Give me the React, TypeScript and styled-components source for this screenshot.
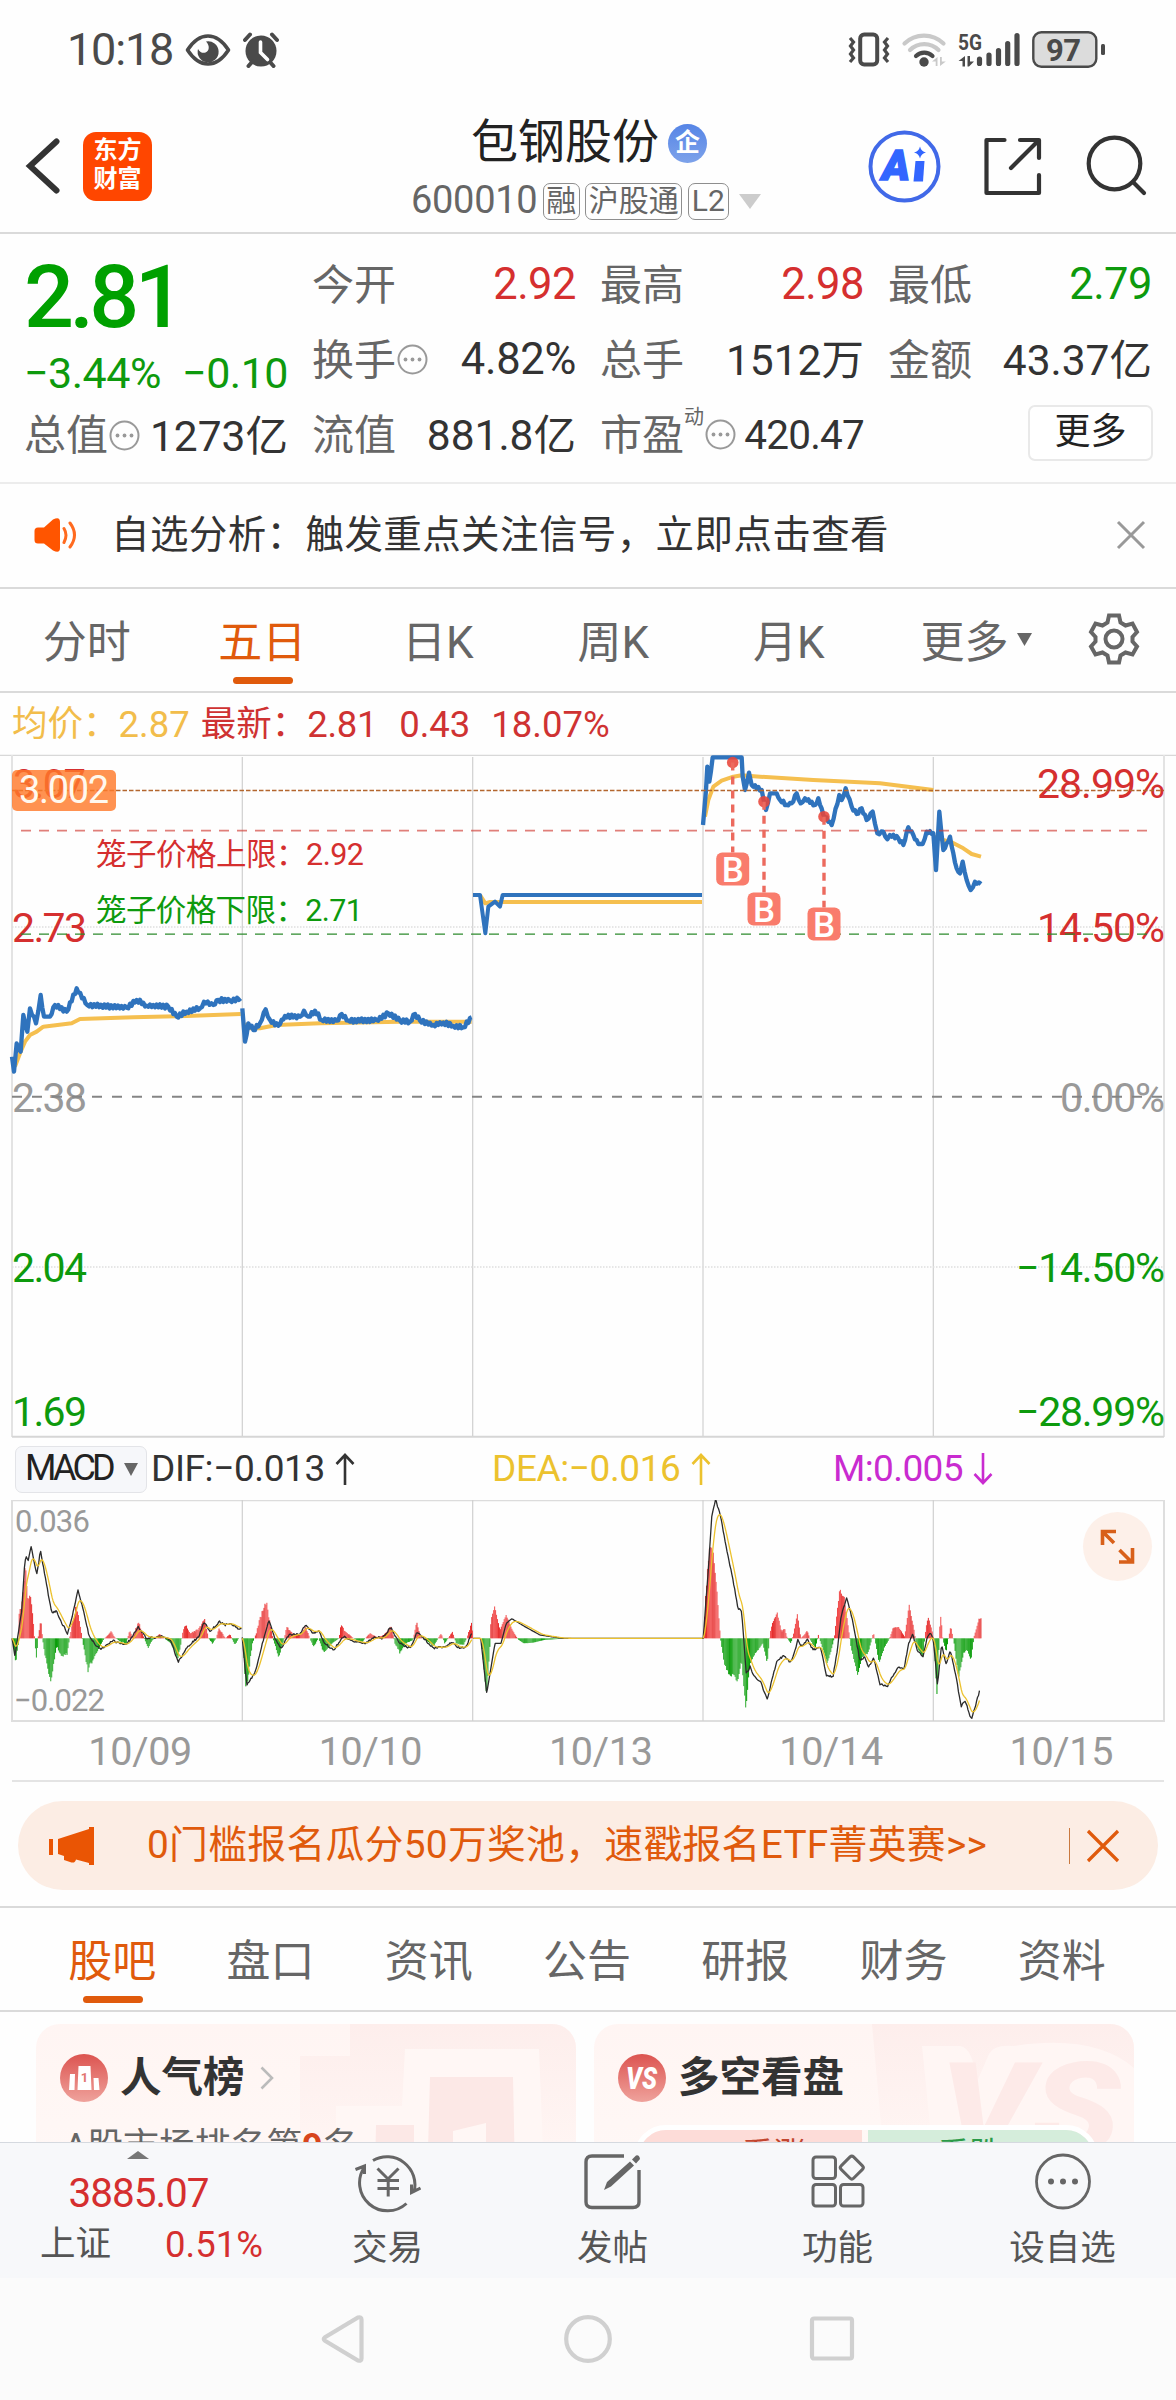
import React from "react";
import styled, { createGlobalStyle, css } from "styled-components";

const GREEN = "#0d9a0d";
const RED = "#d52f2f";
const ORANGE = "#e05a0c";
const FONT = "Roboto, 'Noto Sans CJK SC', sans-serif";

const Global = createGlobalStyle`
  html, body { margin: 0; padding: 0; background: #fefefe; }
  * { box-sizing: border-box; }
  body { font-family: ${FONT}; color: #333; }
  svg { display: block; flex: none; }
`;

const Screen = styled.div`
  width: 1176px;
  height: 2400px;
  display: flex;
  flex-direction: column;
  overflow: hidden;
  background: #fefefe;
`;

type TextProps = { $size: number; $color?: string; $ls?: number; $weight?: number; $ml?: number; $mt?: number };
const Text = styled.span<TextProps>`
  font-size: ${(p) => p.$size}px;
  color: ${(p) => p.$color || "#333"};
  letter-spacing: ${(p) => p.$ls || 0}px;
  font-weight: ${(p) => p.$weight || 400};
  margin-left: ${(p) => p.$ml || 0}px;
  margin-top: ${(p) => p.$mt || 0}px;
  line-height: 1.2;
  white-space: pre;
`;

/* ---------- status bar ---------- */
const StatusBar = styled.div`
  height: 101px;
  flex: none;
  display: flex;
  align-items: center;
  padding: 0 69px 2px 67px;
`;
const StatusGlyph = styled.svg<{ $ml: number }>`
  margin-left: ${(p) => p.$ml}px;
`;
const Spacer = styled.div`flex: 1;`;

/* ---------- header ---------- */
const Header = styled.header`
  height: 133px;
  flex: none;
  border-bottom: 2px solid #dadada;
  display: grid;
  grid-template-columns: 408px 1fr 308px;
`;
const HeaderLeft = styled.div`
  display: flex;
  align-items: center;
  padding: 0 0 1px 24px;
  gap: 23px;
`;
const Logo = styled.div`
  width: 69px;
  height: 69px;
  border-radius: 13px;
  background: #ff4600;
  color: #fff;
  font-size: 24px;
  font-weight: 700;
  line-height: 29px;
  padding-top: 4px;
  text-align: center;
`;
const HeaderMid = styled.div`
  display: flex;
  flex-direction: column;
  align-items: flex-start;
`;
const TitleRow = styled.div`
  display: flex;
  align-items: center;
  height: 73px;
  padding: 9px 0 0 63px;
`;
const Verified = styled.span`
  width: 39px;
  height: 39px;
  margin-left: 9px;
  margin-top: 3px;
  border-radius: 50%;
  background: linear-gradient(#5685e6, #7da2ea);
  color: #fff;
  font-size: 25px;
  font-weight: 700;
  line-height: 37px;
  text-align: center;
`;
const CodeRow = styled.div`
  display: flex;
  align-items: center;
  height: 38px;
  margin-top: 8px;
  padding-left: 3px;
`;
const Tag = styled.span<{ $w: number }>`
  width: ${(p) => p.$w}px;
  height: 37px;
  margin-left: 5.5px;
  border: 1.5px solid #8e8e8e;
  border-radius: 7px;
  color: #666;
  font-size: 30px;
  line-height: 33px;
  text-align: center;
`;
const HeaderRight = styled.div`
  display: flex;
  align-items: center;
  padding-bottom: 1px;
`;

/* ---------- quote ---------- */
const Quote = styled.section`
  height: 250px;
  flex: none;
  border-bottom: 2px solid #ececec;
  padding: 14px 24px 0;
  display: grid;
  grid-template-columns: repeat(4, 264px);
  column-gap: 24px;
`;
const QuoteCol = styled.div`
  display: flex;
  flex-direction: column;
`;
const QuoteRow = styled.div<{ $h?: number }>`
  height: ${(p) => p.$h || 75}px;
  display: flex;
  align-items: center;
  justify-content: space-between;
`;
const Label = styled.span`
  display: flex;
  align-items: center;
  font-size: 42px;
  line-height: 50px;
  color: #666;
`;
const Sup = styled.sup`
  font-size: 20px;
  line-height: 22px;
  align-self: flex-start;
  margin: -5px 0 0 0;
  vertical-align: baseline;
`;
const InfoIcon = styled.svg`
  margin: -2px 0 0 1px;
`;
const MoreButton = styled.button`
  width: 125px;
  height: 56px;
  margin: -6px -1px 0 auto;
  border: 2px solid #e9e9e9;
  border-radius: 7px;
  background: #fff;
  font: 36px/1 ${FONT};
  color: #222;
  padding: 0 0 1px;
`;

/* ---------- alert ---------- */
const Alert = styled.section`
  height: 105px;
  flex: none;
  border-bottom: 2px solid #dadada;
  display: flex;
  align-items: center;
  padding: 0 30px 1px 33px;
`;

/* ---------- tabs ---------- */
const Tabs = styled.nav<{ $h: number; $pad?: number }>`
  height: ${(p) => p.$h}px;
  flex: none;
  border-bottom: 2px solid #dadada;
  display: flex;
  padding: 0 ${(p) => p.$pad || 0}px;
`;
const Tab = styled.div<{ $w: number; $active?: boolean }>`
  width: ${(p) => p.$w}px;
  position: relative;
  display: flex;
  align-items: center;
  justify-content: center;
  font-size: 44px;
  padding: 0 2px 2px 0;
  color: #666;
  ${(p) =>
    p.$active &&
    css`
      color: ${ORANGE};
      &::after {
        content: "";
        position: absolute;
        left: calc(50% - 30px);
        bottom: 7px;
        width: 60px;
        height: 7px;
        border-radius: 4px;
        background: ${ORANGE};
      }
    `}
`;

const Legend = styled.div`
  height: 61px;
  flex: none;
  display: flex;
  align-items: center;
  padding: 2px 0 0 12px;
`;

/* ---------- macd ---------- */
const MacdBar = styled.div`
  height: 62px;
  flex: none;
  display: grid;
  grid-template-columns: 477px 341px 1fr;
  align-items: center;
  padding-left: 15px;
`;
const MacdCell = styled.div`
  display: flex;
  align-items: center;
  gap: 10px;
`;
const MacdButton = styled.div`
  width: 132px;
  height: 47px;
  border: 1.5px solid #e3e4e8;
  border-radius: 7px;
  background: #f6f7fa;
  display: flex;
  align-items: center;
  justify-content: space-between;
  padding: 0 8px 0 9px;
  margin-right: -6px;
`;
const Dates = styled.div`
  height: 59px;
  flex: none;
  margin: 0 12px;
  padding: 1px 0 0 13px;
  border-bottom: 2px solid #e4e4e4;
  display: grid;
  grid-template-columns: repeat(5, 230.3px);
  align-items: center;
  justify-items: center;
`;

/* ---------- banner ---------- */
const BannerWrap = styled.div`
  height: 126px;
  flex: none;
  border-bottom: 2px solid #dadada;
  padding: 19px 18px 0;
`;
const Banner = styled.div`
  height: 89px;
  border-radius: 45px;
  background: #fcede4;
  display: flex;
  align-items: center;
  padding: 0 38px 0 30px;
`;
const Bar = styled.i`
  width: 1.5px;
  height: 36px;
  background: #c9793f;
  margin-right: 16px;
`;

/* ---------- cards ---------- */
const Cards = styled.div`
  height: 130px;
  flex: none;
  padding: 12px 36px 0;
  display: grid;
  grid-template-columns: 540px 540px;
  column-gap: 18px;
  overflow: hidden;
`;
const Card = styled.div`
  height: 200px;
  border-radius: 24px;
  overflow: hidden;
  background: linear-gradient(#fff5f3, #fff9f7);
  position: relative;
`;
const CardDecor = styled.svg`
  position: absolute;
  right: 0;
  top: 0;
`;
const CardHead = styled.div`
  position: relative;
  display: flex;
  align-items: center;
  padding: 24px 0 0 24px;
  height: 84px;
`;
const Chevron = styled.svg`
  margin-left: 15px;
`;
const CardLine = styled.div`
  position: relative;
  margin: 16px 0 0 28px;
  font-size: 36px;
  letter-spacing: -0.2px;
  line-height: 46px;
  color: #666;
  b { color: #d8451c; }
`;
const Versus = styled.div`
  position: relative;
  display: flex;
  gap: 6px;
  margin: 17px 36px 0 40px;
  height: 64px;
  border: 5px solid #fff;
  border-radius: 34px;
  overflow: hidden;
`;
const Side = styled.span<{ $bg: string; $fg: string; $w: number; $shift: number }>`
  width: ${(p) => p.$w}px;
  background: ${(p) => p.$bg};
  color: ${(p) => p.$fg};
  text-indent: ${(p) => p.$shift}px;
  font-size: 32px;
  line-height: 48px;
  text-align: center;
`;

/* ---------- bottom ---------- */
const Bottom = styled.footer`
  height: 136px;
  flex: none;
  background: #f7f8fa;
  border-top: 1.5px solid #d5d9df;
  display: grid;
  grid-template-columns: 275px repeat(4, 225px);
`;
const Index = styled.div`
  display: flex;
  flex-direction: column;
  align-items: center;
  padding-top: 8px;
`;
const IndexRow = styled.div`
  display: flex;
  width: 100%;
  padding: 0 12px 0 40px;
  justify-content: space-between;
  margin-top: 5px;
`;
const Action = styled.div`
  display: flex;
  flex-direction: column;
  align-items: center;
  padding-top: 6px;
  gap: 12px;
`;
const SysNav = styled.div`
  flex: 1;
  background: #fbfbfb;
  display: flex;
  justify-content: center;
  align-items: center;
  gap: 196px;
`;

/* ---------- chart data ---------- */
type Pt = [number, number];
const toPts = (s: string): Pt[] => s.trim().split(/\s+/).map((p) => p.split(",").map(Number) as Pt);
const str = (a: Pt[]) => a.map((p) => p[0].toFixed(1) + "," + p[1].toFixed(1)).join(" ");

const rand = (i: number) => {
  const v = Math.sin(i * 127.1 + 11.7) * 43758.5453;
  return v - Math.floor(v) - 0.5;
};

function resample(pts: Pt[], step: number, amp: number): Pt[] {
  const out: Pt[] = [];
  let k = 0;
  for (let x = pts[0][0]; x <= pts[pts.length - 1][0]; x += step) {
    while (k < pts.length - 2 && pts[k + 1][0] < x) k++;
    const [x0, y0] = pts[k];
    const [x1, y1] = pts[k + 1];
    const y = y0 + ((y1 - y0) * (x - x0)) / (x1 - x0 || 1);
    out.push([x, y + rand(Math.round(x)) * amp]);
  }
  return out;
}
function tick(pts: Pt[], amp: number): Pt[] {
  const out: Pt[] = [];
  for (let k = 0; k < pts.length - 1; k++) {
    const [x0, y0] = pts[k];
    const [x1, y1] = pts[k + 1];
    out.push(pts[k]);
    if (y0 === y1) continue;
    const n = Math.floor((x1 - x0) / 5);
    for (let j = 1; j < n; j++) {
      const t = j / n;
      out.push([x0 + (x1 - x0) * t, y0 + (y1 - y0) * t + (j % 2 ? 1 : -1) * amp * (0.5 + Math.abs(rand(x0 + j)))]);
    }
  }
  out.push(pts[pts.length - 1]);
  return out;
}
function ema(pts: Pt[]): Pt[] {
  let v = pts[0][1];
  return pts.map(([x, y]) => {
    v += (y - v) * 0.22;
    return [x, v] as Pt;
  });
}

const price1 = toPts("36,950 42,995 50,910 62,935 70,825 82,875 90,805 108,850 122,765 132,830 150,830 165,795 200,815 230,745 262,795 380,803 410,780 440,797 505,800 530,830 560,815 600,805 612,785 640,795 655,780 690,782 722,775");
const price2 = toPts("727,805 735,905 745,850 760,870 780,850 797,808 810,840 835,857 855,828 900,830 912,812 925,830 945,812 965,840 1010,842 1025,822 1045,842 1130,840 1165,820 1200,842 1230,845 1245,822 1260,842 1300,855 1330,848 1360,858 1390,862 1415,832");
const price3 = toPts("1419,465 1440,465 1456,580 1465,500 1485,485 1500,500 1508,465 2106,465");
const price4 = toPts("69,255 78,150 82,80 88,125 98,52 185,52 188,110 195,150 207,98 215,135 245,150 258,210 270,160 290,160 300,180 320,195 335,190 350,160 362,190 375,175 405,195 415,175 430,225 455,255 478,165 485,180 497,145 515,200 530,222 545,205 560,240 578,215 592,280 610,275 622,298 630,285 655,295 670,315 685,262 700,285 715,312 728,312 740,275 760,280 768,390 778,215 790,330 800,310 810,290 820,340 830,385 840,400 848,365 860,420 872,450 885,425 903,432");
const avg1 = "45,980 60,940 75,905 90,885 110,875 130,860 215,850 240,837 400,832 560,828 722,822";
const avg2 = "735,850 745,865 780,865 830,855 960,850 1200,845 1415,845";
const avg3 = "1440,465 1456,490 1470,486 2106,486";
const avg4 = "75,230 85,180 100,140 125,122 160,110 185,106 240,110 400,120 600,130 760,150";
const avg5 = "762,290 790,300 818,308 850,325 875,342 903,350";

const hist1 = toPts("32,625 40,700 48,640 49,560 58,520 66,415 72,500 82,500 90,610 96,690 100,625 108,570 112,625 118,670 134,760 150,650 165,680 178,670 184,625 190,590 203,520 213,590 220,640 233,720 255,670 275,628 295,605 305,622 320,635 335,640 345,600 352,625 368,575 380,615 393,655 405,630 424,612 440,628 455,640 472,685 480,650 487,600 495,585 505,610 525,600 545,570 555,625 565,640 575,625 583,595 600,625 612,612 625,645 635,625 646,625 655,788 672,640 682,610 690,570 709,512 722,600 730,640 742,680 757,625 763,590 780,612 800,615 813,590 825,625 835,650 848,625 862,668 885,640 903,625 907,585 920,605 945,628 965,635 985,610 1005,622 1022,615 1042,590 1052,640 1066,670 1080,640 1100,630 1110,575 1120,620 1155,648 1175,610 1185,640 1205,605 1215,640 1235,645 1245,620 1257,575 1260,625");
const hist2 = toPts("1282,625 1296,800 1305,650 1308,570 1318,530 1332,600 1348,555 1365,600 1380,628 1395,640 1420,638 1450,630 1500,626 1568,625");
const hist3 = toPts("307,625 312,500 322,355 332,370 342,480 352,625 362,700 375,735 390,735 397,760 408,690 420,845 430,700 445,670 465,640 477,700 484,610 490,580 503,548 515,605 523,595 530,625 540,640 547,610 557,550 566,625 575,615 583,602 592,630 605,655 613,615 620,640 637,700 650,650 656,620 663,540 670,478 682,505 695,610 700,650 718,737 730,680 745,670 755,630 760,608 766,640 775,700 790,650 803,625 812,595 827,590 843,620 855,525 868,600 875,650 892,680 900,590 906,562 918,610 922,650 930,810 936,600 940,555 945,630 954,665 960,625 966,588 975,640 987,745 1000,670 1010,660 1020,690 1028,620 1042,565 1048,565");
const dif1 = toPts("32,625 40,680 50,600 58,540 66,400 70,380 75,395 83,348 98,435 108,362 122,450 138,550 150,542 165,580 180,610 192,560 208,482 222,540 238,620 255,645 270,658 300,632 335,645 350,625 368,590 390,625 430,620 455,630 475,697 500,650 530,620 545,575 560,605 585,575 600,585 615,580 635,595 645,595");
const dif2 = toPts("646,625 658,765 680,730 700,640 717,572 735,630 750,655 770,615 800,612 815,585 835,610 850,600 865,640 890,660 915,620 950,635 975,640 1000,620 1020,625 1042,592 1065,640 1095,655 1112,605 1135,630 1155,655 1190,650 1205,635 1225,655 1243,650 1260,605");
const dif3 = toPts("1262,625 1282,625 1298,790 1320,640 1336,640 1350,580 1365,566 1400,590 1440,615 1500,625 1875,625");
const dif4 = toPts("307,625 322,400 330,260 340,210 352,250 370,360 390,470 400,535 410,545 422,732 432,710 440,735 460,755 478,810 490,750 505,690 523,678 540,700 552,660 560,628 568,650 585,630 600,660 620,650 635,735 653,742 665,660 675,560 690,502 705,570 725,690 738,682 748,710 762,685 778,762 798,770 812,740 828,712 843,715 855,640 866,612 878,660 893,680 905,620 915,608 922,640 932,765 943,640 955,705 966,660 980,730 995,830 1005,810 1022,868 1035,820 1046,775");

const Bars = ({ data, amp = 10 }: { data: Pt[]; amp?: number }) => {
  const rs = resample(data, 2.55, 0).map(([x, y], i) => {
    const h = (y - 625) * (1 + rand(i) * (amp / 50));
    return [x, h] as Pt;
  });
  return (
    <g>
      {rs.map(([x, h], i) => (
        <rect key={i} x={x} y={h < 0 ? 625 + h : 625} width={2.67} height={Math.abs(h)} fill={h < 0 ? (i % 9 < 4 ? "#e62c2c" : "#f14a4a") : i % 9 < 4 ? "#0a9d0a" : "#2cab2c"} />
      ))}
    </g>
  );
};

const MacdLine = ({ data, noise = 6 }: { data: Pt[]; noise?: number }) => {
  const rs = resample(data, 2.55, noise);
  return (
    <g fill="none" strokeWidth="1.3" strokeLinejoin="round">
      <polyline points={str(rs)} stroke="#2b2b2b" vectorEffect="non-scaling-stroke" />
      <polyline points={str(ema(resample(data, 2.55, 0)))} stroke="#ecc22e" vectorEffect="non-scaling-stroke" />
    </g>
  );
};

type LProps = { x: number; y: number; w: number; size: number; color: string; children: string; weight?: number };
const L = ({ x, y, w, size, color, children, weight }: LProps) => (
  <text x={x} y={y} fontSize={size} fill={color} textLength={w} fontWeight={weight} fontFamily={FONT}>
    {children}
  </text>
);

const DAYS = [242.3, 472.7, 703, 933.3];

const PriceChart = () => (
  <svg width="1176" height="684" viewBox="0 754 1176 684">
    <path d="M0 755.3H1176" stroke="#d8d8d8" strokeWidth="1.3" />
    <path d="M12 755V1437M1164 755V1437" stroke="#e3e3e3" strokeWidth="2" />
    <path d="M12 1436.7H1164" stroke="#d6d6d6" strokeWidth="2" />
    {DAYS.map((x) => (
      <path key={x} d={`M${x} 757V1436`} stroke="#d0d0d0" strokeWidth="1.2" />
    ))}
    <path d="M12 927H1164M12 1267H1164" stroke="#dedede" strokeWidth="1.5" strokeDasharray="1.5 1.5" />
    <L x={13} y={798} w={73} size={40} color={RED}>3.07</L>
    <L x={12} y={942} w={75} size={41} color={RED}>2.73</L>
    <L x={12} y={1112} w={75} size={41} color="#999">2.38</L>
    <L x={12} y={1282} w={75} size={41} color={GREEN}>2.04</L>
    <L x={12} y={1426} w={75} size={41} color={GREEN}>1.69</L>
    <L x={1037} y={798} w={128} size={41} color={RED}>28.99%</L>
    <L x={1037} y={942} w={128} size={41} color={RED}>14.50%</L>
    <L x={1060} y={1112} w={105} size={41} color="#999">0.00%</L>
    <L x={1016} y={1282} w={149} size={41} color={GREEN}>−14.50%</L>
    <L x={1016} y={1426} w={149} size={41} color={GREEN}>−28.99%</L>
    <g transform="translate(0 740) scale(.33333)" fill="none" strokeLinejoin="round">
      {[avg1, avg2, avg3].map((a) => (
        <polyline key={a} points={a} stroke="#f5bf4f" strokeWidth="12" />
      ))}
      <polyline points={str(tick(price1, 6))} stroke="#2f73bd" strokeWidth="13" />
      <polyline points={str(tick(price2, 6))} stroke="#2f73bd" strokeWidth="13" />
      <polyline points={str(price3)} stroke="#2f73bd" strokeWidth="12" />
    </g>
    <g transform="translate(680 740) scale(.33333)" fill="none" strokeLinejoin="round">
      <polyline points={avg4} stroke="#f5bf4f" strokeWidth="12" />
      <polyline points={avg5} stroke="#f5bf4f" strokeWidth="12" />
      <polyline points={str(tick(price4, 5))} stroke="#2f73bd" strokeWidth="13" />
    </g>
    <path d="M12 790.5H1164" stroke="#b3662e" strokeWidth="1.4" strokeDasharray="4.5 2" />
    <path d="M21 830.6H1148" stroke="#cf3a33" strokeOpacity=".65" strokeWidth="1.8" strokeDasharray="10 8" />
    <path d="M21 934.2H1148" stroke="#2c8a2c" strokeWidth="1.3" strokeDasharray="10 8" />
    <path d="M12 1096.8H1164" stroke="#858585" strokeWidth="2" strokeDasharray="10 10" />
    <rect x="12" y="770" width="104" height="41" rx="5" fill="#ff7a2b" fillOpacity=".82" />
    <L x={19} y={803} w={90} size={38} color="#fff8ee">3.002</L>
    <L x={96} y={865} w={268} size={30.5} color={RED}>笼子价格上限：2.92</L>
    <L x={96} y={921} w={267} size={30.5} color={GREEN}>笼子价格下限：2.71</L>
    {[
      [732.7, 762.5, 852.5],
      [764, 801.7, 892.5],
      [824, 816.7, 907.5],
    ].map(([x, y, b]) => (
      <g key={x}>
        <circle cx={x} cy={y} r="5.8" fill="#e8453a" fillOpacity=".88" />
        <path d={`M${x} ${y}V${b}`} stroke="#ec6a5e" strokeWidth="3.4" strokeDasharray="8 6" />
        <rect x={x - 16.5} y={b} width="33" height="33" rx="6" fill="#f97c6c" />
        <text x={x} y={b + 29} fontSize="35" fontWeight="500" textAnchor="middle" fill="#fff" fontFamily={FONT}>B</text>
      </g>
    ))}
  </svg>
);

const MacdChart = () => (
  <svg width="1176" height="223" viewBox="0 1500 1176 223">
    <path d="M12 1500.7H1164" stroke="#dcdcdc" strokeWidth="1.3" />
    <path d="M12 1500V1721H1164V1500" fill="none" stroke="#dedede" strokeWidth="2" />
    {DAYS.map((x) => (
      <path key={x} d={`M${x} 1500V1721`} stroke="#d0d0d0" strokeWidth="1.2" />
    ))}
    <L x={15} y={1532} w={75} size={31} color="#999">0.036</L>
    <L x={14} y={1711} w={91} size={31} color="#999">−0.022</L>
    <g transform="translate(0 1430) scale(.375 .33333)">
      <Bars data={hist1} />
      <Bars data={hist2} amp={2} />
      <MacdLine data={dif1} />
      <MacdLine data={dif2} />
      <MacdLine data={dif3} noise={0} />
    </g>
    <g transform="translate(588 1430) scale(.375 .33333)">
      <Bars data={hist3} amp={4} />
      <MacdLine data={dif4} />
    </g>
    <circle cx="1117.5" cy="1546.5" r="34.5" fill="#fdf0e9" />
    <path d="M1116 1531.5H1102.5V1545M1103 1532L1114 1543M1119.500 1550L1131 1561.500M1119 1562H1132.500V1548" fill="none" stroke="#d8601a" strokeWidth="3.600" />
  </svg>
);

/* ---------- icons ---------- */
const Info = () => (
  <InfoIcon width="31" height="31" viewBox="0 0 31 31">
    <circle cx="15.5" cy="15.5" r="14" fill="none" stroke="#999" strokeWidth="2" />
    <g fill="#999"><circle cx="8.500" cy="15.500" r="1.900" /><circle cx="15.500" cy="15.500" r="1.900" /><circle cx="22.500" cy="15.500" r="1.900" /></g>
  </InfoIcon>
);
const Arrow = ({ color, down }: { color: string; down?: boolean }) => (
  <svg width="20" height="34" viewBox="0 0 20 34">
    <path d={down ? "M10 1V31M1.500 22L10 31L18.500 22" : "M10 33V3M1.500 12L10 3L18.500 12"} fill="none" stroke={color} strokeWidth="2.600" />
  </svg>
);
const Triangle = styled.svg<{ $ml?: number }>`
  margin-left: ${(p) => p.$ml || 0}px;
`;
const Down = ({ w, h, color, ml }: { w: number; h: number; color: string; ml?: number }) => (
  <Triangle $ml={ml} width={w} height={h} viewBox={`0 0 ${w} ${h}`}>
    <path d={`M0 0H${w}L${w / 2} ${h}Z`} fill={color} />
  </Triangle>
);

const StatusIcons = () => (
  <svg width="260" height="44" viewBox="847 28 260 44">
    <g fill="none" stroke="#4a4a4a">
      <rect x="860.2" y="34.600" width="17" height="30" rx="4" strokeWidth="4" />
      <path d="M850 38l3.500 4-3 4 3 4-3 4 3 4-3.500 4M888 38l-3.500 4 3 4-3 4 3 4-3 4 3.500 4" strokeWidth="3.200" />
    </g>
    <g fill="none" strokeLinecap="round" strokeWidth="4.200">
      <path d="M904.500 43.500a28 28 0 0 1 39 0M910 50a20 20 0 0 1 28.500 0" stroke="#c9c9c9" />
      <path d="M916 56a12 12 0 0 1 16.500 0" stroke="#4a4a4a" />
    </g>
    <circle cx="924" cy="62" r="4.700" fill="#4a4a4a" />
    <path d="M937.500 57v9h-1.800v-4.500h-3.700zM940 57l1.800 0v4.500h4l-5.800 4.500z" fill="#c9c9c9" />
    <text x="958" y="49.500" fontSize="22.500" fontWeight="700" fill="#4a4a4a" textLength="24" lengthAdjust="spacingAndGlyphs" fontFamily={FONT}>5G</text>
    <path d="M965 56v10.500h-2.500v-5.500h-4zM967.500 56h2.500v5.500h4l-5 5h-1.500z" fill="#4a4a4a" />
    <g stroke="#4a4a4a" strokeWidth="5.200" strokeLinecap="round">
      <path d="M979.500 59v4.500M989 55v8.500M998.500 50.500v13M1007.700 43.500v20M1017 35.500v28" />
    </g>
    <rect x="1033.300" y="32.300" width="63" height="34.500" rx="8" fill="#dcdcdc" stroke="#4a4a4a" strokeWidth="2.400" />
    <rect x="1101" y="44" width="4" height="11" rx="1.500" fill="#4a4a4a" />
    <text x="1046" y="61" fontSize="31" fontWeight="700" fill="#4a4a4a" textLength="35" fontFamily={FONT}>97</text>
  </svg>
);

export default function App() {
  return (
    <>
      <Global />
      <Screen>
        <StatusBar>
          <Text $size={45} $color="#4a4a4a" $ls={-1.2}>10:18</Text>
          <StatusGlyph $ml={12} width="46" height="34" viewBox="0 0 46 34">
            <path d="M2.500 17C9 7 16 3 23 3s14 4 20.500 14C37 27 30 31 23 31S9 27 2.500 17Z" fill="none" stroke="#4a4a4a" strokeWidth="3.600" strokeLinejoin="round" />
            <path d="M21 8.500a10.500 10.500 0 1 1-8 7.500c2 3.500 5 4.500 7.500 3.500 4-1.500 4.500-7 .5-11Z" fill="#4a4a4a" />
          </StatusGlyph>
          <StatusGlyph $ml={12} width="36" height="36" viewBox="0 0 36 36">
            <circle cx="18" cy="19" r="15.500" fill="#4a4a4a" />
            <path d="M2 8l5-5.500M34 8l-5-5.500M5.500 34l4-4.500M30.500 34l-4-4.500" stroke="#4a4a4a" strokeWidth="4" strokeLinecap="round" />
            <path d="M17.500 10v10.500l7 7" fill="none" stroke="#fff" strokeWidth="3.600" strokeLinecap="round" />
          </StatusGlyph>
          <Spacer />
          <StatusIcons />
        </StatusBar>

        <Header>
          <HeaderLeft>
            <svg width="36" height="56" viewBox="0 0 36 56">
              <path d="M32.500 3.500L6 28L32.500 52.500" fill="none" stroke="#333" strokeWidth="6" strokeLinecap="round" />
            </svg>
            <Logo>东方<br />财富</Logo>
          </HeaderLeft>
          <HeaderMid>
            <TitleRow>
              <Text $size={47} $color="#222">包钢股份</Text>
              <Verified>企</Verified>
            </TitleRow>
            <CodeRow>
              <Text $size={38} $color="#666" $ls={-0.3}>600010</Text>
              <Tag $w={37}>融</Tag>
              <Tag $w={97}>沪股通</Tag>
              <Tag $w={41}>L2</Tag>
              <Down w={22} h={15} color="#ccc" ml={10} />
            </CodeRow>
          </HeaderMid>
          <HeaderRight>
            <svg width="308" height="80" viewBox="868 126 308 80">
              <circle cx="904.500" cy="166.500" r="34" fill="#fff" stroke="#4169e8" strokeWidth="4" />
              <text x="882" y="180" fontSize="42" fontWeight="900" fontStyle="italic" fill="#3366ff" stroke="#3366ff" strokeWidth="1.500" textLength="28" lengthAdjust="spacingAndGlyphs" fontFamily="Roboto, sans-serif">A</text>
              <path d="M915.500 161h9l-1.500 20.500h-9.500z" fill="#3366ff" strokeLinejoin="round" />
              <path d="M920 146.500q1.200 5 6 6q-4.800 1-6 6q-1.200-5-6-6q4.800-1 6-6Z" fill="#3366ff" />
              <g fill="none" stroke="#333" strokeWidth="4.200" strokeLinecap="round" strokeLinejoin="round">
                <path d="M1004.500 140H986.500V193H1039V175M1020 140H1039V158M1037.500 141.500L1011 168" />
                <circle cx="1114.500" cy="163.500" r="25.800" />
                <path d="M1133 182L1144 193" />
              </g>
            </svg>
          </HeaderRight>
        </Header>

        <Quote>
          <QuoteCol>
            <QuoteRow $h={98}>
              <Text $size={88} $color="#00a000" $weight={500} $ls={-4.6}>2.81</Text>
            </QuoteRow>
            <QuoteRow $h={55}>
              <Text $size={43} $color={GREEN} $ls={-0.5}>−3.44%</Text>
              <Text $size={43} $color={GREEN} $ls={-0.5}>−0.10</Text>
            </QuoteRow>
            <QuoteRow $h={70}>
              <Label>总值<Info /></Label>
              <Text $size={42.5}>1273亿</Text>
            </QuoteRow>
          </QuoteCol>
          <QuoteCol>
            <QuoteRow><Label>今开</Label><Text $size={43.5} $color={RED} $ls={-0.5}>2.92</Text></QuoteRow>
            <QuoteRow><Label>换手<Info /></Label><Text $size={43.5} $ls={-0.3}>4.82%</Text></QuoteRow>
            <QuoteRow><Label>流值</Label><Text $size={42.5}>881.8亿</Text></QuoteRow>
          </QuoteCol>
          <QuoteCol>
            <QuoteRow><Label>最高</Label><Text $size={43.5} $color={RED} $ls={-0.5}>2.98</Text></QuoteRow>
            <QuoteRow><Label>总手</Label><Text $size={42.5}>1512万</Text></QuoteRow>
            <QuoteRow><Label>市盈<Sup>动</Sup><Info /></Label><Text $size={40.5} $ls={-0.8}>420.47</Text></QuoteRow>
          </QuoteCol>
          <QuoteCol>
            <QuoteRow><Label>最低</Label><Text $size={43.5} $color={GREEN} $ls={-0.5}>2.79</Text></QuoteRow>
            <QuoteRow><Label>金额</Label><Text $size={42.5}>43.37亿</Text></QuoteRow>
            <QuoteRow><MoreButton>更多</MoreButton></QuoteRow>
          </QuoteCol>
        </Quote>

        <Alert>
          <svg width="46" height="38" viewBox="0 0 46 38">
            <path d="M5 11.500H11L20 3.500Q27 0 27 6V32Q27 38 20 34.500L11 27.500H5Q1.500 27.500 1.500 24V15Q1.500 11.500 5 11.500Z" fill="#ff5500" />
            <path d="M31 12.500Q35 19 31 26.500M37 7Q46 19 37 31" fill="none" stroke="#ff6a1f" strokeWidth="3" strokeLinecap="round" />
          </svg>
          <Text $size={38.5} $ls={0.4} $ml={32} $mt={1}>自选分析：触发重点关注信号，立即点击查看</Text>
          <Spacer />
          <svg width="30" height="30" viewBox="0 0 30 30"><path d="M2 2L28 28M28 2L2 28" stroke="#999" strokeWidth="3" /></svg>
        </Alert>

        <Tabs $h={104}>
          <Tab $w={175.5}>分时</Tab>
          <Tab $w={175.5} $active>五日</Tab>
          <Tab $w={175.5}>日K</Tab>
          <Tab $w={175.5}>周K</Tab>
          <Tab $w={175.5}>月K</Tab>
          <Tab $w={199}>更多<Down w={15} h={13} color="#666" ml={8} /></Tab>
          <Tab $w={77}>
            <svg width="52" height="54" viewBox="0 0 52 54" fill="none" stroke="#666" strokeWidth="4" strokeLinejoin="miter">
              <path d="M21 3.500H31L32.500 10.500L37.500 13.500L44.500 11.500L49 20L44.500 25V29.500L49 34.500L44.500 42.500L37.500 40.500L32.500 43.500L31 50.500H21L19.500 43.500L14.500 40.500L7.500 42.500L3 34.500L7.500 29.500V25L3 20L7.500 11.500L14.500 13.500L19.500 10.500Z" />
              <circle cx="26" cy="27" r="8.500" />
            </svg>
          </Tab>
        </Tabs>

        <Legend>
          <Text $size={35.5} $color="#f2bd4b">均价：</Text>
          <Text $size={36.500} $color="#f2bd4b">2.87</Text>
          <Text $size={35.5} $color="#cf3232" $ml={11}>最新：</Text>
          <Text $size={36.5} $color="#cf3232" $ls={-0.3}>2.81</Text>
          <Text $size={36.5} $color="#cf3232" $ml={22}>0.43</Text>
          <Text $size={36.5} $color="#cf3232" $ml={21}>18.07%</Text>
        </Legend>

        <PriceChart />

        <MacdBar>
          <MacdCell>
            <MacdButton>
              <Text $size={36} $color="#222" $ls={-3.8}>MACD</Text>
              <Down w={14} h={13} color="#666" />
            </MacdButton>
            <Text $size={37} $ls={-0.4}>DIF:−0.013</Text>
            <Arrow color="#333" />
          </MacdCell>
          <MacdCell><Text $size={37} $ls={-0.4} $color="#ecc22e">DEA:−0.016</Text><Arrow color="#ecc22e" /></MacdCell>
          <MacdCell><Text $size={37} $ls={-0.6} $color="#c92bd0">M:0.005</Text><Arrow color="#c92bd0" down /></MacdCell>
        </MacdBar>

        <MacdChart />

        <Dates>
          {["10/09", "10/10", "10/13", "10/14", "10/15"].map((d) => (
            <Text key={d} $size={39.5} $color="#999" $ls={-0.3}>{d}</Text>
          ))}
        </Dates>

        <BannerWrap>
          <Banner>
            <svg width="48" height="42" viewBox="0 0 48 42" fill="#ea5504">
              <path d="M1 14H5V30H1ZM10 14L41 4V2H46V40H41V38L28 34.500Q27 39 22 37L16 35V31L10 29Z" />
            </svg>
            <Text $size={38.8} $ls={0.3} $color={ORANGE} $ml={51}>0门槛报名瓜分50万奖池，速戳报名ETF菁英赛&gt;&gt;</Text>
            <Spacer />
            <Bar />
            <svg width="34" height="34" viewBox="0 0 34 34"><path d="M2 2L32 32M32 2L2 32" stroke={ORANGE} strokeWidth="3.200" /></svg>
          </Banner>
        </BannerWrap>

        <Tabs $h={104} $pad={34}>
          {["股吧", "盘口", "资讯", "公告", "研报", "财务", "资料"].map((t, i) => (
            <Tab key={t} $w={158.3} $active={i === 0}>{t}</Tab>
          ))}
        </Tabs>

        <Cards>
          <Card>
            <CardDecor width="280" height="200" viewBox="0 0 280 200">
              <defs>
                <linearGradient id="fade" x1="0" y1="0" x2="0" y2="1">
                  <stop offset="0" stopColor="#fdeeec" />
                  <stop offset=".6" stopColor="#fff5f3" />
                </linearGradient>
              </defs>
              <path d="M54 0H280V200H4V32H54Z" fill="url(#fade)" />
              <path d="M109 25H243L250 200H40V82H106Z" fill="#fff7f5" />
              <path d="M134 53H217L220 200H130Z" fill="#fce8e6" />
              <path d="M80 101H118V200H78Z" fill="#fce8e6" />
              <path d="M157 107L190 99V200H157Z" fill="#fff7f5" />
            </CardDecor>
            <CardHead>
              <svg width="48" height="48" viewBox="0 0 48 48">
                <defs>
                  <linearGradient id="disc" x1="0" y1="0" x2="0" y2="1">
                    <stop offset="0" stopColor="#dc5450" />
                    <stop offset="1" stopColor="#efa29c" />
                  </linearGradient>
                </defs>
                <circle cx="24" cy="24" r="24" fill="url(#disc)" />
                <path d="M10 20H15L14.500 36H9ZM18.500 12H30.500L31.500 36H17.500ZM33.500 24H38.500L39.500 36H34Z" fill="#fff" />
                <text x="24.500" y="28" fontSize="13" fontWeight="700" fill="#e27570" textAnchor="middle" fontFamily={FONT}>1</text>
              </svg>
              <Text $size={41.5} $weight={600} $ml={12}>人气榜</Text>
              <Chevron width="14" height="24" viewBox="0 0 14 24">
                <path d="M1.500 1.500L12 12L1.500 22.500" fill="none" stroke="#bbb" strokeWidth="2.600" />
              </Chevron>
            </CardHead>
            <CardLine>A股市场排名第<b>9</b>名</CardLine>
          </Card>
          <Card>
            <CardDecor width="270" height="200" viewBox="0 0 270 200">
              <path d="M8 0H270V200H26Z" fill="url(#fade)" />
              <path d="M58 22H96Q110 24 112 60L125 30Q130 20 150 22Q230 10 270 44V200H76Z" fill="#fff6f4" />
              <text x="76" y="128" fontSize="125" fontWeight="900" fontStyle="italic" fill="#fdeae8" textLength="180" lengthAdjust="spacingAndGlyphs" fontFamily="Roboto, sans-serif">VS</text>
            </CardDecor>
            <CardHead>
              <svg width="48" height="48" viewBox="0 0 48 48">
                <circle cx="24" cy="24" r="24" fill="url(#disc)" />
                <text x="8" y="35" fontSize="31" fontWeight="900" fontStyle="italic" fill="#fff" textLength="31" lengthAdjust="spacingAndGlyphs" fontFamily="Roboto, sans-serif">VS</text>
              </svg>
              <Text $size={41.5} $weight={600} $ml={12}>多空看盘</Text>
            </CardHead>
            <Versus>
              <Side $w={225} $shift={46} $bg="#fddcd8" $fg="#c2452f">看涨</Side>
              <Side $w={227} $shift={-22} $bg="#d5eddb" $fg="#2b9a48">看跌</Side>
            </Versus>
          </Card>
        </Cards>

        <Bottom>
          <Index>
            <svg width="22" height="8" viewBox="0 0 22 8"><path d="M0 8L11 0L22 8Z" fill="#777" /></svg>
            <Text $size={40.500} $color={RED} $ls={-1} $ml={2} $mt={10}>3885.07</Text>
            <IndexRow>
              <Text $size={35.5} $color="#555">上证</Text>
              <Text $size={36.500} $color={RED}>0.51%</Text>
            </IndexRow>
          </Index>
          <Action>
            <svg width="66" height="66" viewBox="0 0 66 66" fill="none" stroke="#666" strokeWidth="3">
              <path d="M17.500 11.500A28 28 0 0 1 58.500 43M56 35.500V43.500L65 39M51 54.500A28 28 0 0 1 9 18M0 20.500L9 17V25" transform="translate(.5 0)" />
              <path d="M22.500 19.500L33 30L43.500 19.500M22.500 31.500H44M22.500 39.500H44M33.200 30V47.500" />
            </svg>
            <Text $size={35.5} $color="#555">交易</Text>
          </Action>
          <Action>
            <svg width="66" height="66" viewBox="0 0 66 66" fill="none" stroke="#666" strokeWidth="3.400">
              <path d="M44 7H12Q6 7 6 13V53Q6 58.500 12 58.500H53Q59 58.500 59 53V21" />
              <path d="M24 41L27 33L50 12.500L54 16.500L31 37.500ZM52 10.500L56 6.500Q58.500 5.500 59.500 8L60 10L56 14.500Z" fill="#666" stroke="none" />
            </svg>
            <Text $size={35.5} $color="#555">发帖</Text>
          </Action>
          <Action>
            <svg width="66" height="66" viewBox="0 0 66 66" fill="none" stroke="#666" strokeWidth="3">
              <rect x="8" y="8" width="22.500" height="21.500" rx="3" />
              <rect x="8" y="35.500" width="22.500" height="21.500" rx="3" />
              <rect x="35.500" y="35.500" width="22.500" height="21.500" rx="3" />
              <rect x="38" y="9.800" width="17.600" height="17.600" rx="2.500" transform="rotate(45 46.800 18.600)" />
            </svg>
            <Text $size={35.5} $color="#555">功能</Text>
          </Action>
          <Action>
            <svg width="66" height="66" viewBox="0 0 66 66" fill="none" stroke="#666" strokeWidth="2.800">
              <circle cx="33" cy="32.500" r="26.500" />
              <g fill="#666" stroke="none"><circle cx="21" cy="32.500" r="3" /><circle cx="33" cy="32.500" r="3" /><circle cx="45" cy="32.500" r="3" /></g>
            </svg>
            <Text $size={35.5} $color="#555">设自选</Text>
          </Action>
        </Bottom>

        <SysNav>
          <svg width="48" height="50" viewBox="0 0 48 50" fill="none" stroke="#d0d0d0" strokeWidth="4.200"><path d="M5 23.200Q2.500 25 5 26.800L38 46.500Q41.500 47.500 41.500 44.500V5.500Q41.500 2.500 38 3.500Z" /></svg>
          <svg width="48" height="50" viewBox="0 0 48 50" fill="none" stroke="#d0d0d0" strokeWidth="4.200"><circle cx="24" cy="25" r="21.800" /></svg>
          <svg width="48" height="50" viewBox="0 0 48 50" fill="none" stroke="#d0d0d0" strokeWidth="4.200"><rect x="4" y="4.500" width="40" height="40" rx="2" /></svg>
        </SysNav>
      </Screen>
    </>
  );
}
